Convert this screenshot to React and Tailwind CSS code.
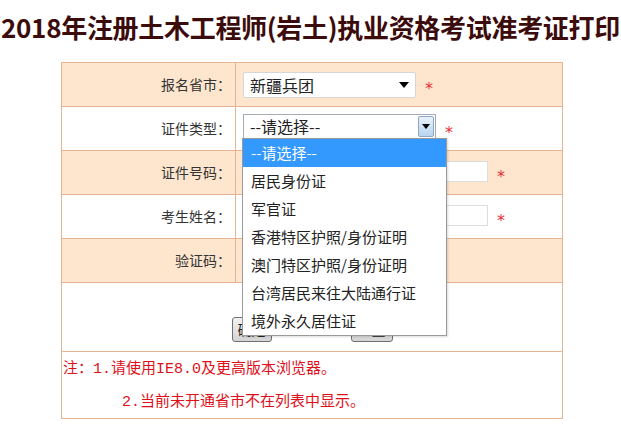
const cjk = { fontFamily: '"Noto Sans CJK SC", "Noto Sans", sans-serif' };
const song = { fontFamily: '"Liberation Mono", "Noto Sans CJK SC", monospace' };

const options = [
  "--请选择--",
  "居民身份证",
  "军官证",
  "香港特区护照/身份证明",
  "澳门特区护照/身份证明",
  "台湾居民来往大陆通行证",
  "境外永久居住证",
];

const Star = () => (
  <span className="ml-[9px] mt-[8px] text-[16px] text-[#e8303a] leading-none" style={{ fontFamily: '"DejaVu Sans", sans-serif' }}>
    *
  </span>
);

const Row = ({ label, shaded, children }) => (
  <div className={`flex h-[44px] border-b border-[#e3b592] ${shaded ? "bg-[#fde6cd]" : "bg-white"}`}>
    <div className="w-[174px] border-r border-[#e3b592] flex items-center justify-end pr-[4px] text-[14px] text-[#333]">
      {label}
    </div>
    <div className="flex-1 flex items-center pl-[7px] relative">{children}</div>
  </div>
);

const Dropdown = () => (
  <div className="absolute left-[6px] top-[31px] w-[205px] bg-white border border-[#9a9a9a] z-10 shadow-[1px_1px_2px_rgba(0,0,0,0.15)]">
    {options.map((o, i) => (
      <div
        key={o}
        className={`h-[28px] flex items-center pl-[8px] text-[15px] ${i === 0 ? "bg-[#3399ff] text-white" : "text-[#222]"}`}
      >
        {o}
      </div>
    ))}
  </div>
);

export default function App() {
  return (
    <div className="w-[621px] h-[429px] bg-white overflow-hidden" style={cjk}>
      <h1 className="text-center whitespace-nowrap font-bold text-[26px] leading-[30px] pt-[12px] text-[#3c0b0b] tracking-[-0.3px]">
        2018年注册土木工程师(岩土)执业资格考试准考证打印
      </h1>

      <div className="ml-[61px] mt-[20px] w-[502px] border border-[#e3b592]">
        <Row label="报名省市：" shaded>
          <div className="w-[173px] h-[26px] border border-[#d6d6d6] rounded-[2px] bg-white flex items-center justify-between pl-[6px] pr-[6px] text-[16px] text-[#222]">
            <span>新疆兵团</span>
            <span className="w-0 h-0 border-l-[5px] border-r-[5px] border-t-[6px] border-l-transparent border-r-transparent border-t-black" />
          </div>
          <Star />
        </Row>

        <Row label="证件类型：">
          <div className="w-[193px] h-[25px] -mt-[5px] border border-[#a5acb5] bg-white flex items-stretch text-[16px] text-[#222]">
            <span className="flex-1 flex items-center pl-[6px]">--请选择--</span>
            <span className="w-[16px] m-[1px] border border-[#8ea6c4] rounded-[2px] bg-gradient-to-b from-[#e8f2fc] to-[#b8d4ef] flex items-center justify-center">
              <span className="w-0 h-0 border-l-[4px] border-r-[4px] border-t-[5px] border-l-transparent border-r-transparent border-t-black" />
            </span>
          </div>
          <Star />
          <Dropdown />
        </Row>

        <Row label="证件号码：" shaded>
          <div className="w-[245px] h-[21px] -mt-[3px] border border-[#ddd] bg-white" />
          <Star />
        </Row>

        <Row label="考生姓名：">
          <div className="w-[245px] h-[21px] -mt-[3px] border border-[#ddd] bg-white" />
          <Star />
        </Row>

        <Row label="验证码：" shaded>
          <div className="w-[90px] h-[21px] border border-[#ddd] bg-white" />
        </Row>

        <div className="h-[69px] border-b border-[#e3b592] flex items-end justify-center gap-[79px] pb-[9px]">
          <button className="w-[40px] h-[25px] border border-[#707070] rounded-[3px] bg-gradient-to-b from-[#f2f2f2] to-[#d4d4d4] text-[14px] text-[#222]">
            确定
          </button>
          <button className="w-[42px] h-[25px] border border-[#707070] rounded-[3px] bg-gradient-to-b from-[#f2f2f2] to-[#d4d4d4] text-[14px] text-[#222]">
            重置
          </button>
        </div>

        <div className="h-[66px] pl-[1px] pt-[1px] text-[15px] text-[#e0101a] leading-[33px]" style={song}>
          <p>注：1.请使用IE8.0及更高版本浏览器。</p>
          <p className="pl-[59px]">2.当前未开通省市不在列表中显示。</p>
        </div>
      </div>
    </div>
  );
}
